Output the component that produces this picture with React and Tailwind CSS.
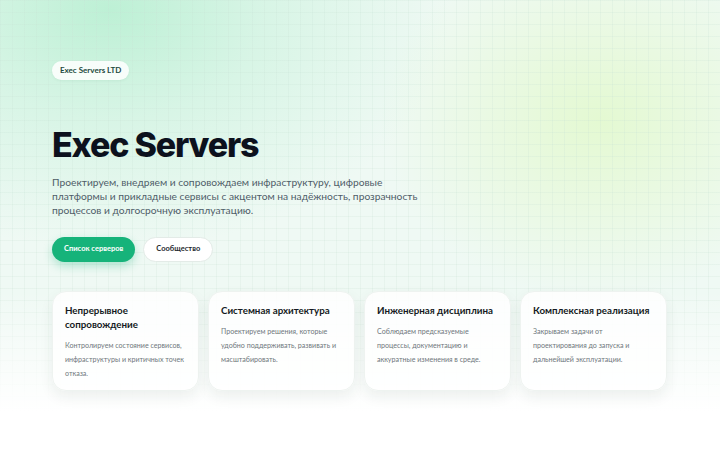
import React from "react";

const features = [
  {
    title: "Непрерывное сопровождение",
    text: "Контролируем состояние сервисов, инфраструктуры и критичных точек отказа.",
  },
  {
    title: "Системная архитектура",
    text: "Проектируем решения, которые удобно поддерживать, развивать и масштабировать.",
  },
  {
    title: "Инженерная дисциплина",
    text: "Соблюдаем предсказуемые процессы, документацию и аккуратные изменения в среде.",
  },
  {
    title: "Комплексная реализация",
    text: "Закрываем задачи от проектирования до запуска и дальнейшей эксплуатации.",
  },
];

export default function App() {
  return (
    <div className="min-h-[450px] bg-white font-['Lato','Noto_Sans',sans-serif]">
      <section className="relative overflow-hidden bg-[#eff9f4] px-[52px] pt-[55px] pb-[20px]">
        {/* background glows */}
        <div className="pointer-events-none absolute inset-0 bg-[radial-gradient(ellipse_340px_240px_at_110px_10px,#bdf0d5_0%,rgba(200,242,220,0.6)_45%,rgba(239,249,244,0)_100%)]" />
        <div className="pointer-events-none absolute inset-0 bg-[radial-gradient(ellipse_220px_180px_at_600px_120px,#e4f9d2_0%,rgba(230,249,215,0.6)_50%,rgba(239,249,244,0)_100%)]" />
        {/* grid */}
        <div className="pointer-events-none absolute inset-0 bg-[linear-gradient(to_right,rgba(200,225,212,0.22)_1px,transparent_1px),linear-gradient(to_bottom,rgba(200,225,212,0.22)_1px,transparent_1px)] bg-[size:12px_12px]" />
        {/* fade to white */}
        <div className="pointer-events-none absolute inset-x-0 bottom-0 h-[120px] bg-gradient-to-b from-transparent to-white" />

        <div className="relative">
          <span className="inline-flex h-[19px] items-center rounded-full bg-white/85 px-[8px] text-[8px] font-bold text-[#1d4a3d] shadow-[0_1px_3px_rgba(16,80,50,0.06)]">
            Exec Servers LTD
          </span>

          <h1 className="mt-[45px] font-['Inter',sans-serif] text-[34px] font-extrabold leading-[40px] tracking-[-0.035em] text-[#0c111d]">
            Exec Servers
          </h1>

          <p className="mt-[10px] w-[372px] text-[10.25px] leading-[14px] text-[#4f5d68]">
            Проектируем, внедряем и сопровождаем инфраструктуру, цифровые платформы и прикладные сервисы с акцентом на надёжность, прозрачность процессов и долгосрочную эксплуатацию.
          </p>

          <div className="mt-[20px] flex gap-[8px]">
            <button className="h-[25px] rounded-full bg-[#16b37a] px-[12px] text-[7.5px] font-bold text-white shadow-[0_4px_10px_rgba(22,179,122,0.3)]">
              Список серверов
            </button>
            <button className="h-[25px] rounded-full border border-[#e3ebe7] bg-white px-[12px] text-[7.5px] font-bold text-[#1f2a30]">
              Сообщество
            </button>
          </div>

          <div className="mt-[29px] grid w-[615px] grid-cols-4 gap-[9px]">
            {features.map((f) => (
              <div
                key={f.title}
                className="h-[100px] rounded-[14px] border border-[#eef3f0] bg-white/85 px-[12px] pt-[11px] shadow-[0_6px_14px_rgba(30,60,45,0.07)]"
              >
                <h3 className="text-[9.75px] font-bold leading-[14px] text-[#141a22]">{f.title}</h3>
                <p className="mt-[8px] text-[7.1px] leading-[14px] text-[#6f777c]">
                  {f.text}
                </p>
              </div>
            ))}
          </div>
        </div>
      </section>
    </div>
  );
}
